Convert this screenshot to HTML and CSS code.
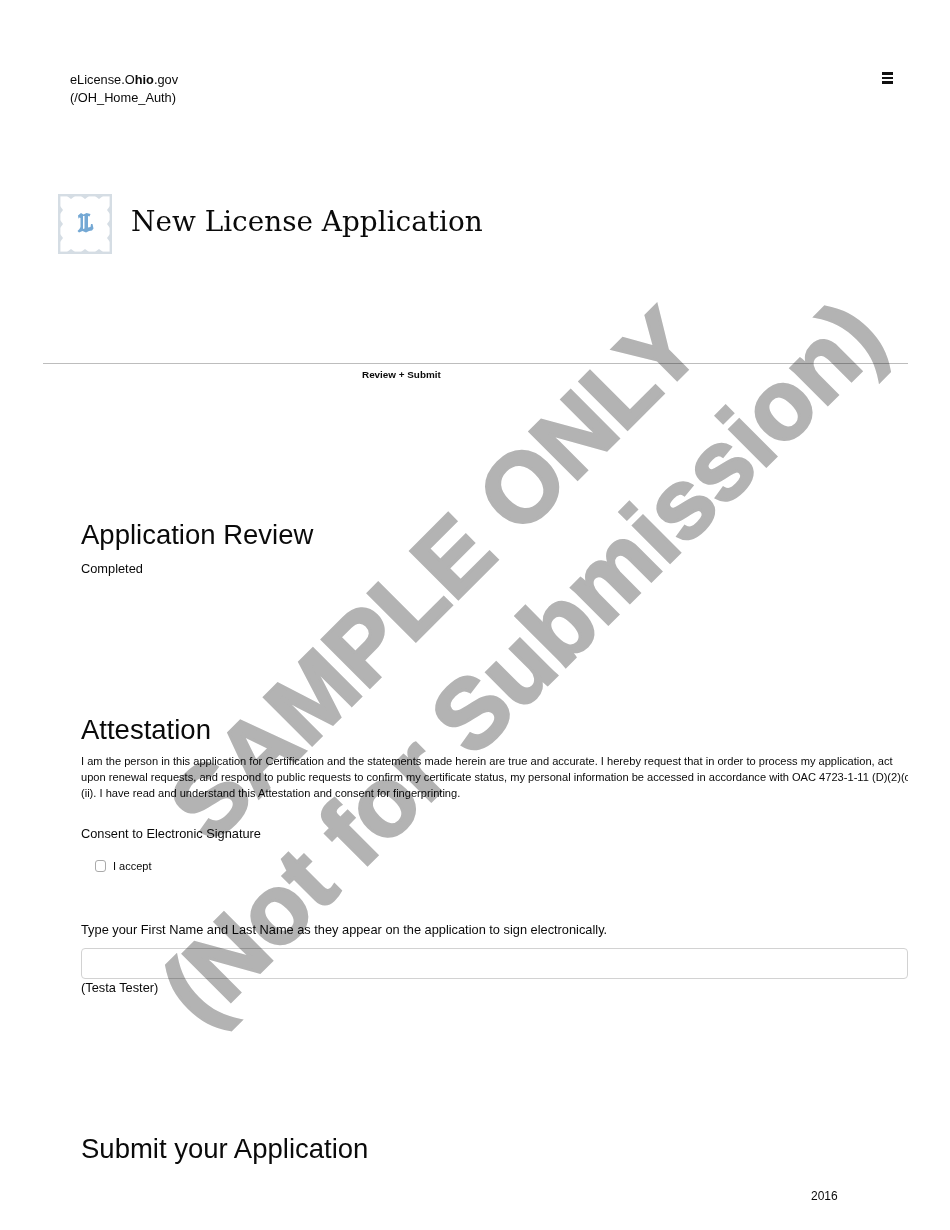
FILE: index.html
```html
<!DOCTYPE html>
<html lang="en">
<head>
<meta charset="utf-8">
<title>New License Application</title>
<link rel="stylesheet" href="styles.css">
</head>
<body>
<div class="page">
  <header class="topbar">
    <a class="brand">eLicense.O<b>hio</b>.gov<br>(/OH_Home_Auth)</a>
    <span class="menu" aria-label="Menu"><i></i><i></i><i></i></span>
  </header>
  <div class="title-row">
    <svg class="stamp" viewBox="0 0 54 60" aria-hidden="true">
      <rect class="stamp-edge" x="1.2" y="1.2" width="51.6" height="57.6"/>
      <path class="stamp-notch" d="M9 2l4 3 4-3ZM23 2l4 3 4-3ZM37 2l4 3 4-3ZM9 58l4-3 4 3ZM23 58l4-3 4 3ZM37 58l4-3 4 3ZM2 12l3 4-3 4ZM2 26l3 4-3 4ZM2 40l3 4-3 4ZM52 12l-3 4 3 4ZM52 26l-3 4 3 4ZM52 40l-3 4 3 4Z"/>
      <path class="stamp-letter" d="M20 21.5l3-2.5 2.5 1.500 3-1.500 4 1-1 2.500-1.500-.5v11.500l2.500-.5.500-3h1.500l1 4.500-1.500 2-3 .5-3 1.500-3.500-1.500-3.500 1.500-1.500-1.500 2-2 1-2V24l-1.500-.5-.5 1.500ZM25 22v13l1.500-.5V22Z"/>
    </svg>
    <h1>New License Application</h1>
  </div>
  <div class="step-rule">
    <span class="step-label">Review + Submit</span>
  </div>
  <main class="content">
    <section class="review">
      <h2>Application Review</h2>
      <p class="status">Completed</p>
    </section>
    <section class="attest">
      <h2>Attestation</h2>
      <p class="legal">I am the person in this application for Certification and the statements made herein are true and accurate. I hereby request that in order to process my application, act<br>upon renewal requests, and respond to public requests to confirm my certificate status, my personal information be accessed in accordance with OAC 4723-1-11 (D)(2)(c)<br>(ii). I have read and understand this Attestation and consent for fingerprinting.</p>
      <p class="consent">Consent to Electronic Signature</p>
      <label class="accept"><span class="box"></span>I accept</label>
      <p class="sign-label">Type your First Name and Last Name as they appear on the application to sign electronically.</p>
      <div class="sign-input"></div>
      <p class="hint">(Testa Tester)</p>
    </section>
    <section class="submit">
      <h2>Submit your Application</h2>
    </section>
  </main>
  <footer class="year">2016</footer>
  <div class="watermark" aria-hidden="true"><div class="wm-text">SAMPLE ONLY<br>(Not for Submission)</div></div>
</div>
</body>
</html>
```
FILE: styles.css
```css
* { box-sizing: border-box; }
html, body { margin: 0; padding: 0; background: #fff; }
body { font-family: "Liberation Sans", Arial, sans-serif; color: #0a0a0a; }
.page { position: relative; width: 950px; height: 1230px; overflow: hidden; }
.topbar { display: flex; justify-content: space-between; align-items: flex-start; padding: 71px 57px 0 70px; height: 194px; }
.brand { font-size: 12.8px; line-height: 18px; }
.menu { display: flex; flex-direction: column; gap: 2px; margin-top: 1px; width: 11px; }
.menu i { display: block; height: 2.6px; background: #111; }
.title-row { display: flex; align-items: center; gap: 19px; padding-left: 58px; height: 60px; }
.stamp { width: 54px; height: 60px; flex: none; }
.stamp-edge { fill: #fff; stroke: #d5dde4; stroke-width: 2.4; }
.stamp-notch { fill: #d5dde4; }
.stamp-letter { fill: #74a8d4; fill-rule: evenodd; }
h1 { margin: 0 0 6px; font-family: "DejaVu Serif", serif; font-weight: 400; font-size: 27.9px; white-space: nowrap; }
.step-rule { margin: 109px 42px 0 43px; border-top: 1px solid #bdbdbd; height: 22px; padding-left: 319px; padding-top: 4px; }
.step-label { display: block; font-size: 9.9px; font-weight: 700; line-height: 13px; }
.content { margin-left: 81px; width: 827px; overflow: hidden; }
h2 { margin: 0; font-weight: 400; font-size: 27.5px; line-height: 32px; }
.review { padding-top: 134px; }
.status { margin: 9px 0 0; font-size: 12.8px; line-height: 17px; }
.attest { padding-top: 137px; }
.legal { margin: 8px 0 0; font-size: 11.1px; line-height: 15.8px; white-space: nowrap; }
.consent { margin: 24px 0 0; font-size: 12.8px; line-height: 17px; }
.accept { display: flex; align-items: center; gap: 7px; margin: 18px 0 0 14px; font-size: 11px; line-height: 13px; }
.box { display: block; width: 11px; height: 12px; margin-top: -1px; border: 1px solid #aaa; border-radius: 3px; background: #fff; }
.sign-label { margin: 48px 0 0; font-size: 12.8px; line-height: 17px; }
.sign-input { margin-top: 10px; height: 31px; border: 1px solid #d2d2d2; border-radius: 4px; }
.hint { margin: 0; font-size: 12.8px; line-height: 17px; }
.submit { padding-top: 137px; }
.year { position: absolute; left: 811px; top: 1189px; font-size: 12px; line-height: 14px; }
.watermark { position: absolute; inset: 0; display: flex; align-items: center; justify-content: center; mix-blend-mode: multiply; pointer-events: none; }
.wm-text { transform: translate(3.5px, 3.5px) rotate(-45deg); font-size: 98px; font-weight: 700; -webkit-text-stroke: 3px #b3b3b3; line-height: 124px; color: #b3b3b3; text-align: center; white-space: nowrap; }
```
